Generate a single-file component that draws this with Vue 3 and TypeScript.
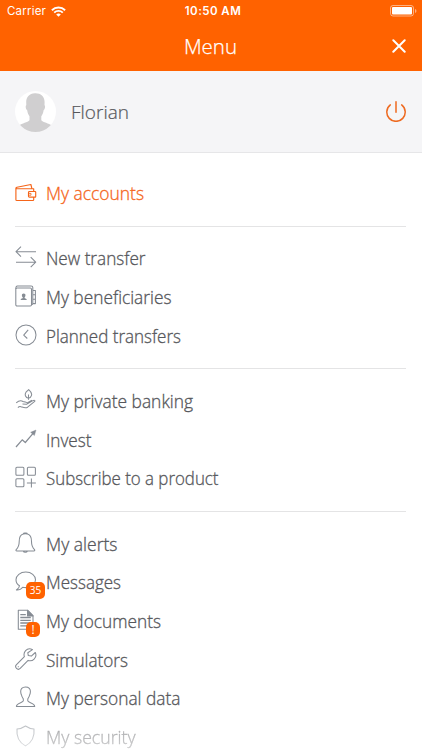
<script setup lang="ts">
interface MenuItem {
  label: string
  icon: string
  width: number
  badge?: string
  active?: boolean
  faded?: boolean
}

const groups: MenuItem[][] = [
  [{ label: 'My accounts', icon: 'wallet', width: 98, active: true }],
  [
    { label: 'New transfer', icon: 'transfer', width: 99.5 },
    { label: 'My beneficiaries', icon: 'contacts', width: 125.5 },
    { label: 'Planned transfers', icon: 'clock', width: 135 },
  ],
  [
    { label: 'My private banking', icon: 'plant', width: 147 },
    { label: 'Invest', icon: 'chart', width: 45.5 },
    { label: 'Subscribe to a product', icon: 'grid', width: 172.5 },
  ],
  [
    { label: 'My alerts', icon: 'bell', width: 71.5 },
    { label: 'Messages', icon: 'chat', width: 75, badge: '35' },
    { label: 'My documents', icon: 'document', width: 115, badge: '!' },
    { label: 'Simulators', icon: 'wrench', width: 82 },
    { label: 'My personal data', icon: 'person', width: 134.5 },
    { label: 'My security', icon: 'shield', width: 89.5, faded: true },
  ],
]
</script>

<template>
  <div class="screen">
    <header class="top">
      <div class="status">
        <div class="carrier">
          <span>Carrier</span>
          <svg width="15" height="11" viewBox="0 0 15 11" fill="none" stroke="#fff" stroke-width="1.9">
            <path d="M.9 4.2C4.6.6 10.400.6 14.100 4.200M3.200 6.600c2.400-2.300 6.200-2.300 8.600 0" />
            <path d="M7.500 10.700 5.200 8.400c1.300-1.200 3.300-1.200 4.600 0z" fill="#fff" stroke="none" />
          </svg>
        </div>
        <span class="time">10:50 AM</span>
        <svg class="battery" width="27" height="12" viewBox="0 0 27 12">
          <rect x=".5" y=".5" width="23" height="10.500" rx="2.500" fill="none" stroke="#fff" stroke-opacity=".5" />
          <rect x="2" y="2" width="20" height="7.500" rx="1" fill="#fff" />
          <path d="M25 4v4q1.500-.7 1.500-2T25 4" fill="#fff" fill-opacity=".5" />
        </svg>
      </div>
      <div class="title-bar">
        <h1>Menu</h1>
        <svg class="close" width="14" height="14" viewBox="0 0 14 14" stroke="#fff" stroke-width="2" stroke-linecap="round">
          <path d="m1.300 1.300 11.400 11.400M12.700 1.300 1.300 12.700" />
        </svg>
      </div>
    </header>

    <section class="profile">
      <svg width="41" height="41" viewBox="0 0 41 41">
        <defs><clipPath id="avatar"><circle cx="20.500" cy="20.500" r="20.500" /></clipPath></defs>
        <circle cx="20.500" cy="20.500" r="20.500" fill="#fff" />
        <path clip-path="url(#avatar)" fill="#d0cfd0" d="M20 2.300c5.500-.2 9.500 3.200 9.600 8.700l-.1 3.300c1 .5.700 3.800-.9 5-.4 2.800-1.200 4.500-2.300 5.900v4c1.800 2.400 7.500 2.800 10.500 5.300L41 41H0l4-6.500c3-2.500 8.700-2.900 10.500-5.300v-4c-1.100-1.400-1.900-3.100-2.300-5.900-1.600-1.200-1.900-4.500-.9-5L11.200 11C11.200 6.500 14 2.500 20 2.300z" />
      </svg>
      <span class="name">Florian</span>
      <svg class="power" width="20" height="21" viewBox="0 0 20 21" fill="none" stroke="#ee6a20" stroke-width="1.500" stroke-linecap="round">
        <path d="M10 .8v10.400M4.300 3.900a9.200 9.200 0 1 0 11.400 0" />
      </svg>
    </section>

    <nav>
      <ul v-for="(group, index) in groups" :key="index">
        <li v-for="item in group" :key="item.label" :class="{ active: item.active, faded: item.faded }">
          <span class="icon">
            <svg width="22" height="22" viewBox="0 0 22 22" fill="none" stroke="currentColor" stroke-width="1.050" stroke-linejoin="round">
              <g v-if="item.icon === 'wallet'" stroke-width="1.150">
                <path d="M18.700 10.500V7.700H1.700q-.8 0-.8-.8v11.800q0 .8.900.8h16q.9 0 .9-.8v-2.600M1.500 7.600q-.8-1 .5-1.300L15.900 3.500l1 4.200M18.700 10.500h-4.300q-.9 0-.9.900v3.800q0 .9.900.9h5.800q.5 0 .5-.6v-4.400q0-.6-.5-.6z" />
                <path d="M13.700 12.400h2.300v1.800h-2.300" stroke-width=".8" />
              </g>
              <path v-else-if="item.icon === 'transfer'" d="M21 5.700H1M6 .7 1 5.700l5 4.900M1 16.200h19.800M15.700 11.200l5 5-5 4.900" />
              <g v-else-if="item.icon === 'contacts'">
                <rect x=".8" y="3" width="15.700" height="17.900" rx="1.200" />
                <path d="M.9 4Q.7 1 2.400 1h13.800q1.600 0 1.600 1.600v15.600q0 1.400-1.300 1.500M17.800 5.500h2.600v4.300h-2.600M17.800 9.800h2.600v4.500h-2.600M17.800 14.300h2.600v4.300h-2.600" />
                <path fill="currentColor" stroke="none" d="M8.700 8.500c2.500 0 2 3 .8 4 0 1.300 2.300.8 2.300 2.500H5.600c0-1.700 2.300-1.200 2.300-2.500-1.200-1-1.700-4 .8-4" />
              </g>
              <path v-else-if="item.icon === 'clock'" d="M21 11a10 10 0 1 1-20 0 10 10 0 0 1 20 0M13.200 5.900l-4.500 5.300 3.600 3.300" />
              <g v-else-if="item.icon === 'plant'" stroke-width="1.050">
                <path d="M13.500 10.800V5.500M13.500 9.200C10.500 9 9.400 5.500 11 3.200L13.700.6c1.600 1.400 3.800 3.400 2.700 6-.5 1.600-1.500 2.500-2.900 2.600" />
                <path d="M1.200 13.900c2.500-2.200 5-2.500 6.800-1.400l3.200.7c2 .1 2 2 .1 2l-3.800-.1M11.500 15.200l6.900-3.800c1.300-.5 2.100.4 1 1.300l-6.800 5.500c-2.200 1.500-4.500.2-6.700-.5-1.500-.5-2.300.2-3 .9M13 13.500l4-2.200" />
              </g>
              <g v-else-if="item.icon === 'chart'">
                <path d="m1 19 6.200-7.200 3.100 2.700 8.200-9.600" stroke-width="1.200" />
                <path d="m21 2-5.400 2.300 3.800 3.300z" fill="currentColor" stroke-width=".4" />
              </g>
              <g v-else-if="item.icon === 'grid'">
                <rect x=".9" y="1.300" width="8" height="8" rx="1" /><rect x="12.400" y="1.300" width="8" height="8" rx="1" />
                <rect x=".9" y="12.700" width="8" height="8" rx="1" /><path d="M16.400 12.400v9M11.900 16.900h9" />
              </g>
              <g v-else-if="item.icon === 'bell'">
                <path d="M8.200 2.100C4.700 3 4.200 6 4.200 9.500c0 5-1.100 6.200-3 8.100-.6.700-.2 1.300.6 1.300h17.100c.8 0 1.200-.6.600-1.300-1.900-1.900-3-3.100-3-8.100 0-3.500-.5-6.500-4-7.400q-.3-1-1.500-1h-1.300q-1.200 0-1.500 1c1.500-.5 2.800-.5 4.300 0M8.200 19q.4 1.300 2.100 1.300T12.500 19" />
              </g>
              <path v-else-if="item.icon === 'chat'" d="M10.800 2C5.200 2 1 5.500 1 9.800c0 2.500 1.300 4.600 3.500 6C4.400 17.400 3 18.900 1.400 20c2.700.2 4.900-.9 6.300-2.800 1 .3 2 .4 3.100.4 5.600 0 9.700-3.500 9.700-7.800S16.400 2 10.800 2z" />
              <g v-else-if="item.icon === 'document'">
                <path d="M3.300 1.300h9.500l5.200 5.300v13.700H3.300z" />
                <path d="M12.500 1.300v5.600H18z" fill="currentColor" />
                <path d="M5.300 5.700h5.500M5.300 8.500h10.500M5.300 11.300h10.500M5.300 14h10.500M5.300 16.800h8" stroke-width="1.300" />
              </g>
              <path v-else-if="item.icon === 'wrench'" d="M17.500 1.600c-2.300-1.200-5.200-.8-6.900 1-1.600 1.700-1.900 4-1.200 6L1.500 16.700a2.500 2.500 0 0 0 3.700 3.700l7.900-8c2 .7 4.500.2 6-1.300 1.800-1.700 2.200-4.400 1.200-6.600l-4 3.600-3-.5-.5-2.900zM3.300 18.300v.9" />
              <path v-else-if="item.icon === 'person'" d="M10.500 1C7.100 1 5.500 3 5.700 5.700c.1 1.500.2 2.300.8 3.300.3 1.900 1.200 3 1.800 3.900v2c-.4 2-6.900 1.700-6.900 5.600h18.300c0-3.900-6.500-3.600-6.900-5.600v-2c.6-.9 1.500-2 1.800-3.900.6-1 .7-1.800.8-3.300C15.600 3 13.900 1 10.500 1z" />
              <path v-else d="M10.500 1C8 2.800 5 3.800 2 3.900c-.7 7 1.700 13.400 8.500 17 6.800-3.600 9.200-10 8.500-17-3-.1-6-1.100-8.500-2.900z" />
            </svg>
            <span v-if="item.badge" class="badge" :class="{ small: item.badge === '!' }">{{ item.badge }}</span>
          </span>
          <svg class="label" :width="item.width + 8" height="28">
            <text x="0" y="20" :textLength="item.width" lengthAdjust="spacingAndGlyphs">{{ item.label }}</text>
          </svg>
        </li>
      </ul>
    </nav>
  </div>
</template>

<style>
body {
  margin: 0;
  overflow: hidden;
}
</style>

<style scoped>
.screen {
  width: 422px;
  height: 750px;
  overflow: hidden;
  background: #fff;
  color: #56575b;
  font-family: "Open Sans", "Noto Sans", sans-serif;
  font-weight: 350;
}
.top {
  height: 71px;
  background: #ff6200;
  color: #fff;
}
.status {
  display: grid;
  grid-template-columns: 1fr auto 1fr;
  align-items: center;
  height: 22px;
  padding: 0 5px 0 7px;
  box-sizing: border-box;
  font-family: Inter, sans-serif;
  font-size: 11.500px;
  font-weight: 400;
}
.carrier {
  display: flex;
  align-items: center;
  gap: 5px;
  letter-spacing: 0.2px;
}
.time {
  padding-left: 2px;
  font-weight: 600;
  letter-spacing: 0.450px;
}
.battery {
  justify-self: end;
}
.title-bar {
  display: grid;
  grid-template-columns: 1fr auto 1fr;
  align-items: center;
  height: 48px;
  padding: 0 16px 0 15px;
}
h1 {
  grid-column: 2;
  margin: 0;
  font-size: 20.500px;
  font-weight: 350;
  line-height: 48px;
  -webkit-text-stroke: 0.25px currentColor;
}
.close {
  justify-self: end;
}
.profile {
  display: flex;
  align-items: center;
  height: 82px;
  box-sizing: border-box;
  padding: 0 16px 0 15px;
  background: #f5f5f7;
  border-bottom: 1px solid #e6e6e8;
}
.name {
  margin-left: 15px;
  font-size: 19px;
  -webkit-text-stroke: 0.2px currentColor;
}
.power {
  margin-left: auto;
}
nav {
  padding: 8.500px 16px 0 15px;
}
ul {
  list-style: none;
  margin: 0;
  padding: 13.300px 0 12.300px;
}
ul + ul {
  border-top: 1px solid #e4e4e5;
}
li {
  display: flex;
  align-items: center;
  height: 38.700px;
}
.icon {
  position: relative;
  width: 22px;
  height: 22px;
  margin: -4px 9px 0 0;
  color: #868c94;
}
.icon svg {
  display: block;
}
.active,
.active .icon {
  color: #f5651a;
}
.label {
  overflow: visible;
}
.label text {
  fill: currentColor;
  stroke: currentColor;
  stroke-width: 0.3px;
  font-size: 17.500px;
}
.badge {
  position: absolute;
  left: 11px;
  top: 12px;
  width: 19px;
  height: 17px;
  border-radius: 5px;
  background: #ff6200;
  color: #fff;
  font-size: 10px;
  font-weight: 400;
  line-height: 17px;
  text-align: center;
}
.small {
  width: 14px;
  height: 15px;
  top: 13px;
  font-size: 12px;
  line-height: 15px;
}
.faded {
  -webkit-mask-image: linear-gradient(rgba(0, 0, 0, 0.600), rgba(0, 0, 0, 0.200));
  mask-image: linear-gradient(rgba(0, 0, 0, 0.600), rgba(0, 0, 0, 0.200));
}
</style>
